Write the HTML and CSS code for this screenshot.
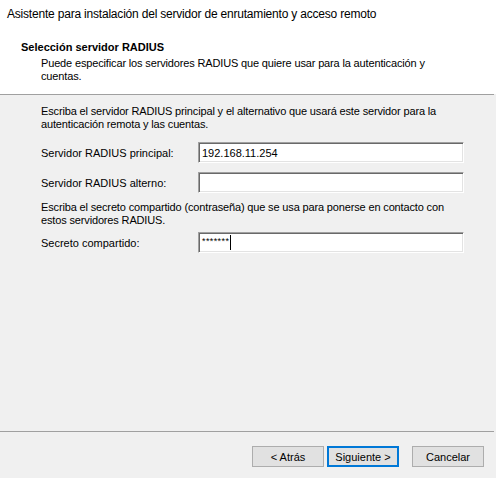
FILE: index.html
```html
<!DOCTYPE html>
<html lang="es">
<head>
<meta charset="utf-8">
<title>Asistente</title>
<link rel="stylesheet" href="styles.css">
</head>
<body>
<div class="dialog">
  <header class="header">
    <div class="title">Asistente para instalación del servidor de enrutamiento y acceso remoto</div>
    <div class="heading">Selección servidor RADIUS</div>
    <div class="subheading">Puede especificar los servidores RADIUS que quiere usar para la autenticación y<br>cuentas.</div>
  </header>
  <div class="sep"></div>
  <main class="content">
    <p class="note">Escriba el servidor RADIUS principal y el alternativo que usará este servidor para la<br>autenticación remota y las cuentas.</p>
    <div class="row row-first">
      <span class="label">Servidor RADIUS principal:</span>
      <div class="field">192.168.11.254</div>
    </div>
    <div class="row row-second">
      <span class="label">Servidor RADIUS alterno:</span>
      <div class="field"></div>
    </div>
    <p class="note note-second">Escriba el secreto compartido (contraseña) que se usa para ponerse en contacto con<br>estos servidores RADIUS.</p>
    <div class="row row-third">
      <span class="label">Secreto compartido:</span>
      <div class="field field-pass"><span class="dots">*******</span><span class="caret"></span></div>
    </div>
  </main>
  <div class="sep"></div>
  <footer class="footer">
    <button class="btn">&lt; Atrás</button>
    <button class="btn btn-default">Siguiente &gt;</button>
    <button class="btn btn-cancel">Cancelar</button>
  </footer>
</div>
</body>
</html>
```
FILE: styles.css
```css
html, body {
  margin: 0;
  padding: 0;
}
body {
  width: 496px;
  height: 478px;
  background: #f0f0f0;
  font-family: "Liberation Sans", Arial, sans-serif;
  font-size: 11px;
  color: #000;
  overflow: hidden;
}
.dialog {
  display: flex;
  flex-direction: column;
  height: 478px;
}
.header {
  background: #fff;
  height: 94px;
  box-sizing: border-box;
  padding-top: 6px;
}
.title {
  font-size: 12px;
  line-height: 16px;
  padding-left: 7px;
  letter-spacing: -0.2px;
}
.heading {
  font-weight: bold;
  font-size: 11px;
  line-height: 14px;
  padding-left: 21px;
  margin-top: 18px;
}
.subheading {
  line-height: 13px;
  padding-left: 41px;
  margin-top: 3px;
  white-space: nowrap;
  letter-spacing: -0.15px;
}
.sep {
  height: 1px;
  background: #a0a0a0;
  margin-right: 2px;
}
.content {
  flex: 1;
  padding: 10px 32px 0 41px;
}
.note {
  margin: 0;
  line-height: 13px;
  white-space: nowrap;
  letter-spacing: -0.15px;
}
.note-second {
  margin-top: 8px;
}
.row {
  display: flex;
  align-items: center;
}
.row-first { margin-top: 11px; }
.row-second { margin-top: 9px; }
.row-third { margin-top: 5px; }
.label {
  width: 157px;
  flex: none;
}
.field {
  width: 266px;
  height: 21px;
  box-sizing: border-box;
  background: #fff;
  border-top: 1px solid #a0a0a0;
  border-left: 1px solid #a0a0a0;
  border-right: 1px solid #fff;
  border-bottom: 1px solid #fff;
  box-shadow: inset 1px 1px 0 #696969, inset -1px -1px 0 #e3e3e3;
  padding: 3px 3px 0 3px;
  line-height: 14px;
  display: flex;
  align-items: flex-start;
}
.field-pass {
  align-items: center;
  padding-top: 0;
}
.dots {
  font-size: 9px;
  letter-spacing: 0.4px;
  line-height: 8px;
  margin-top: -4px;
}
.caret {
  width: 1px;
  height: 15px;
  background: #000;
  margin-left: 1px;
}
.footer {
  height: 46px;
  box-sizing: border-box;
  padding: 14px 12px 0 0;
  display: flex;
  justify-content: flex-end;
  align-items: flex-start;
}
.btn {
  font-family: "Liberation Sans", Arial, sans-serif;
  font-size: 11px;
  width: 72px;
  height: 21px;
  margin: 0;
  padding: 0;
  background: #e1e1e1;
  border: 1px solid #adadad;
  color: #000;
  box-sizing: border-box;
}
.btn-default {
  border: 2px solid #0078d7;
  margin-left: 3px;
}
.btn-cancel {
  margin-left: 13px;
}
```
